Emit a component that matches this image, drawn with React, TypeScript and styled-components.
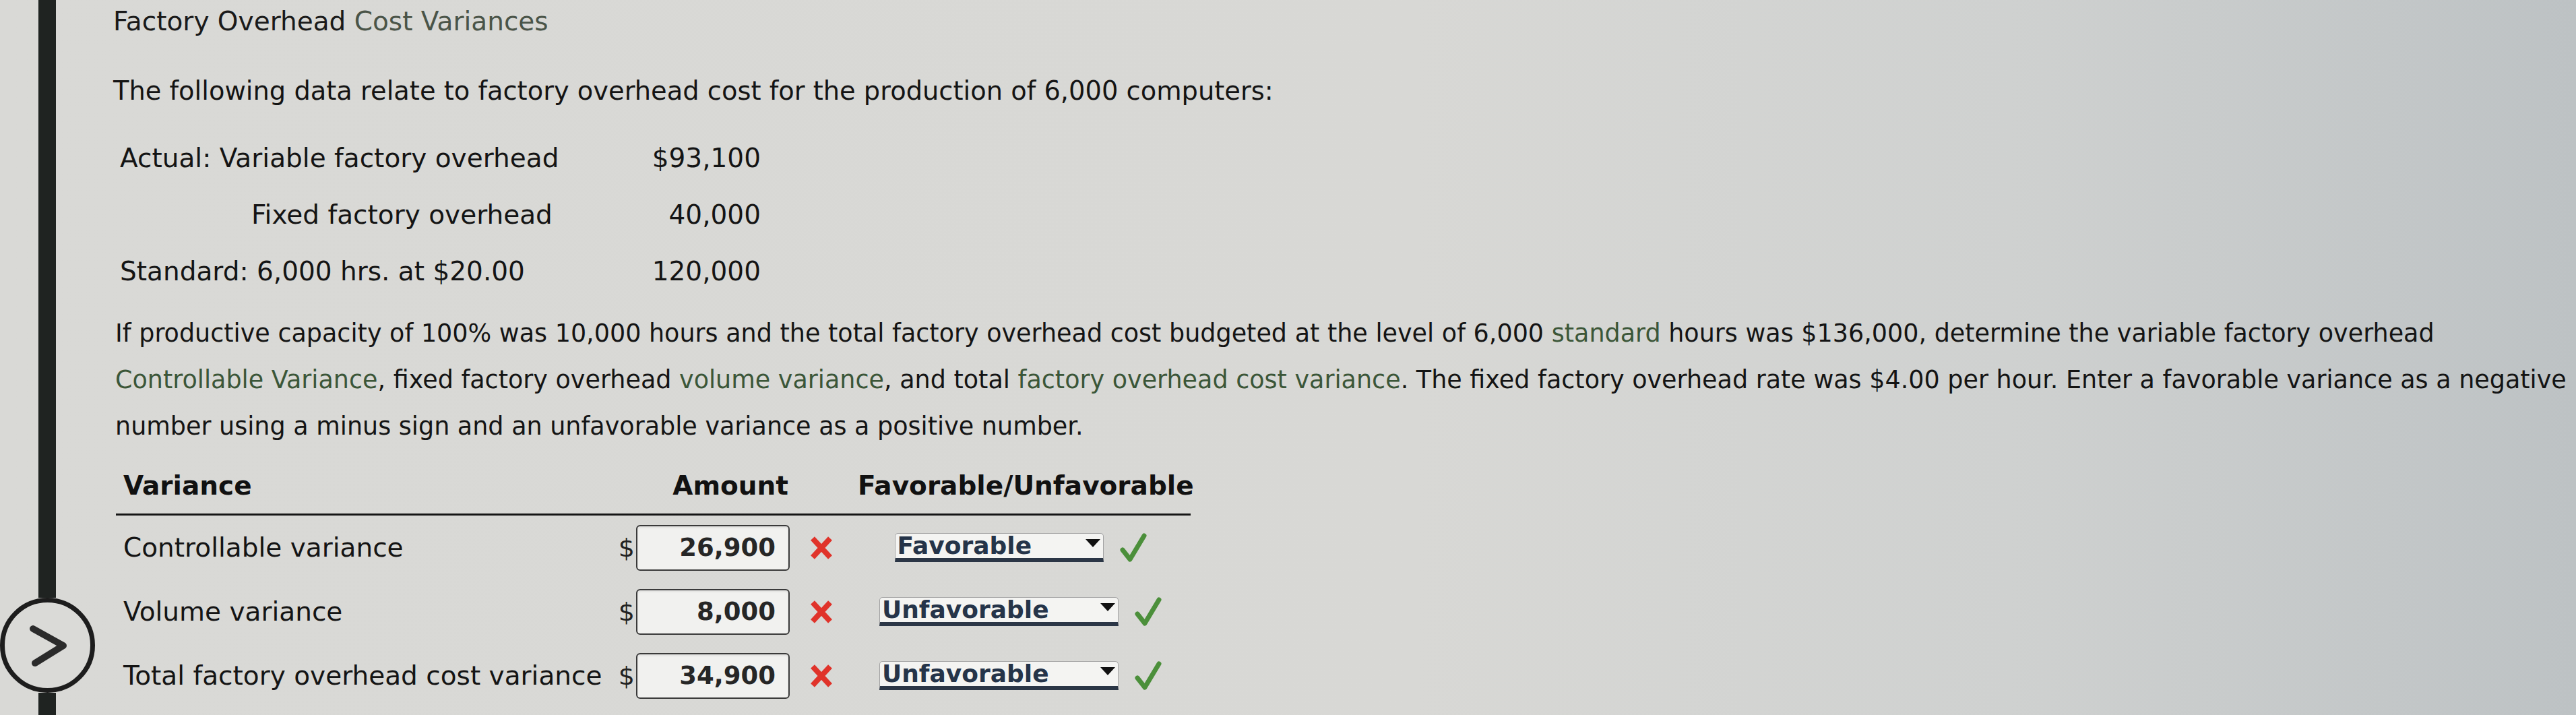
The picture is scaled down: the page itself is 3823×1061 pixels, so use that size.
import React from 'react';
import styled, { createGlobalStyle } from 'styled-components';

const GlobalStyle = createGlobalStyle`
  html, body {
    margin: 0;
    padding: 0;
  }

  body {
    font-family: 'DejaVu Sans', Verdana, sans-serif;
    color: #141414;
    background: linear-gradient(to right, #d9d9d6 0%, #d8d8d5 55%, #cfd1d0 78%, #bdc2c4 100%);
  }
`;

const Page = styled.div`
  display: flex;
  height: 100vh;
  overflow: hidden;
`;

const Rail = styled.div`
  width: 140px;
  flex-shrink: 0;
  display: flex;
  flex-direction: column;
  align-items: center;
`;

const RailLine = styled.div<{ $grow?: boolean }>`
  width: 26px;
  background: #1f2321;
  flex: ${(p) => (p.$grow ? '1' : '0 0 33px')};
`;

const NextButton = styled.button`
  width: 141px;
  height: 141px;
  flex-shrink: 0;
  border-radius: 50%;
  border: 7px solid #1d1d1d;
  background: #dadad7;
  display: flex;
  align-items: center;
  justify-content: center;
  padding: 0;
  cursor: pointer;
`;

const Content = styled.main`
  flex: 1;
  padding: 7px 0 0 28px;
`;

const Title = styled.h1`
  margin: 0;
  font-size: 39px;
  line-height: 50px;
  font-weight: normal;
  color: #1a1a1a;
`;

const Muted = styled.span`
  color: #4a5448;
`;

const Term = styled.span`
  color: #3b5638;
`;

const Intro = styled.p`
  margin: 53px 0 0;
  font-size: 38.4px;
  line-height: 50px;
`;

const DataGrid = styled.div`
  margin-top: 32px;
  padding-left: 10px;
  display: grid;
  grid-template-columns: 720px 231px;
  grid-auto-rows: 84px;
  align-items: center;
  font-size: 39px;
`;

const DataLabel = styled.div<{ $indent?: number }>`
  padding-left: ${(p) => p.$indent ?? 0}px;
  white-space: nowrap;
`;

const DataValue = styled.div`
  text-align: right;
`;

const Question = styled.p`
  margin: 16px 0 0;
  padding-left: 3px;
  font-size: 36.5px;
  line-height: 69px;
  white-space: nowrap;
`;

const Table = styled.div`
  margin-top: 29px;
  margin-left: 4px;
  width: 1595px;
  display: grid;
  grid-template-columns: 742px 262px 86px 505px;
  font-size: 39px;
`;

const HeadCell = styled.div<{ $align?: string }>`
  font-weight: bold;
  line-height: 50px;
  padding: 0 6px 16px 11px;
  border-bottom: 3px solid #151515;
  text-align: ${(p) => p.$align ?? 'left'};
  color: #111;
  white-space: nowrap;
`;

const Cell = styled.div`
  height: 95px;
  display: flex;
  align-items: center;
`;

const LabelCell = styled(Cell)`
  padding-left: 11px;
  white-space: nowrap;
`;

const AmountCell = styled(Cell)`
  justify-content: flex-end;
  padding-right: 4px;
  gap: 2px;
`;

const Dollar = styled.span`
  font-size: 38px;
  color: #222;
`;

const AmountInput = styled.input`
  box-sizing: border-box;
  width: 228px;
  height: 68px;
  border: 2px solid #3a3a3a;
  border-radius: 6px;
  background: #f1f1ef;
  box-shadow: inset 0 2px 3px rgba(0, 0, 0, 0.08);
  font-family: 'DejaVu Sans', Verdana, sans-serif;
  font-size: 37px;
  font-weight: bold;
  color: #262626;
  text-align: right;
  padding: 0 19px 0 0;
  outline: none;
`;

const MarkCell = styled(Cell)`
  justify-content: center;
`;

const ChoiceCell = styled(Cell)`
  justify-content: center;
  gap: 24px;
`;

const SelectBox = styled.div<{ $width: number }>`
  box-sizing: border-box;
  width: ${(p) => p.$width}px;
  height: 43px;
  display: flex;
  align-items: center;
  justify-content: space-between;
  padding: 0 4px 0 3px;
  background: #f4f4f2;
  border: 1px solid #a2a2a2;
  border-bottom: 6px solid #2b3646;
  border-radius: 5px 5px 0 0;
  font-size: 36px;
  font-weight: bold;
  line-height: 36px;
  color: #253449;
`;

const Caret = styled.span`
  width: 0;
  height: 0;
  border-left: 11px solid transparent;
  border-right: 11px solid transparent;
  border-top: 12px solid #111;
  margin-bottom: 8px;
`;

const Chevron = () => (
  <svg width="70" height="70" viewBox="0 0 70 70">
    <path d="M14 10 L59 35 L17 61" fill="none" stroke="#2b2b2b" strokeWidth="10" strokeLinecap="round" strokeLinejoin="round" />
  </svg>
);

const WrongMark = () => (
  <svg width="36" height="34" viewBox="0 0 36 34">
    <path d="M5 3 L31 31 M31 3 L5 31" stroke="#e0332a" strokeWidth="8" strokeLinecap="butt" />
  </svg>
);

const RightMark = () => (
  <svg width="40" height="44" viewBox="0 0 40 44">
    <path d="M4 25 L15 39 L36 4" fill="none" stroke="#4b8f3a" strokeWidth="7" strokeLinecap="round" strokeLinejoin="round" />
  </svg>
);

const rows = [
  { label: 'Controllable variance', amount: '26,900', choice: 'Favorable', width: 310 },
  { label: 'Volume variance', amount: '8,000', choice: 'Unfavorable', width: 355 },
  { label: 'Total factory overhead cost variance', amount: '34,900', choice: 'Unfavorable', width: 355 },
];

const App: React.FC = () => {
  return (
    <>
      <GlobalStyle />
      <Page>
        <Rail>
          <RailLine $grow />
          <NextButton aria-label="Next">
            <Chevron />
          </NextButton>
          <RailLine />
        </Rail>

        <Content>
          <Title>
            Factory Overhead <Muted>Cost Variances</Muted>
          </Title>

          <Intro>The following data relate to factory overhead cost for the production of 6,000 computers:</Intro>

          <DataGrid>
            <DataLabel>Actual: Variable factory overhead</DataLabel>
            <DataValue>$93,100</DataValue>
            <DataLabel $indent={195}>Fixed factory overhead</DataLabel>
            <DataValue>40,000</DataValue>
            <DataLabel>Standard: 6,000 hrs. at $20.00</DataLabel>
            <DataValue>120,000</DataValue>
          </DataGrid>

          <Question>
            If productive capacity of 100% was 10,000 hours and the total factory overhead cost budgeted at the level of 6,000{' '}
            <Term>standard</Term> hours was $136,000, determine the variable factory overhead
            <br />
            <Term>Controllable Variance</Term>, fixed factory overhead <Term>volume variance</Term>, and total{' '}
            <Term>factory overhead cost variance</Term>. The fixed factory overhead rate was $4.00 per hour. Enter a favorable variance as a negative
            <br />
            number using a minus sign and an unfavorable variance as a positive number.
          </Question>

          <Table>
            <HeadCell>Variance</HeadCell>
            <HeadCell $align="right">Amount</HeadCell>
            <HeadCell />
            <HeadCell $align="center">Favorable/Unfavorable</HeadCell>

            {rows.map((row) => (
              <React.Fragment key={row.label}>
                <LabelCell>{row.label}</LabelCell>
                <AmountCell>
                  <Dollar>$</Dollar>
                  <AmountInput readOnly value={row.amount} />
                </AmountCell>
                <MarkCell>
                  <WrongMark />
                </MarkCell>
                <ChoiceCell>
                  <SelectBox $width={row.width}>
                    {row.choice}
                    <Caret />
                  </SelectBox>
                  <RightMark />
                </ChoiceCell>
              </React.Fragment>
            ))}
          </Table>
        </Content>
      </Page>
    </>
  );
};

export default App;
